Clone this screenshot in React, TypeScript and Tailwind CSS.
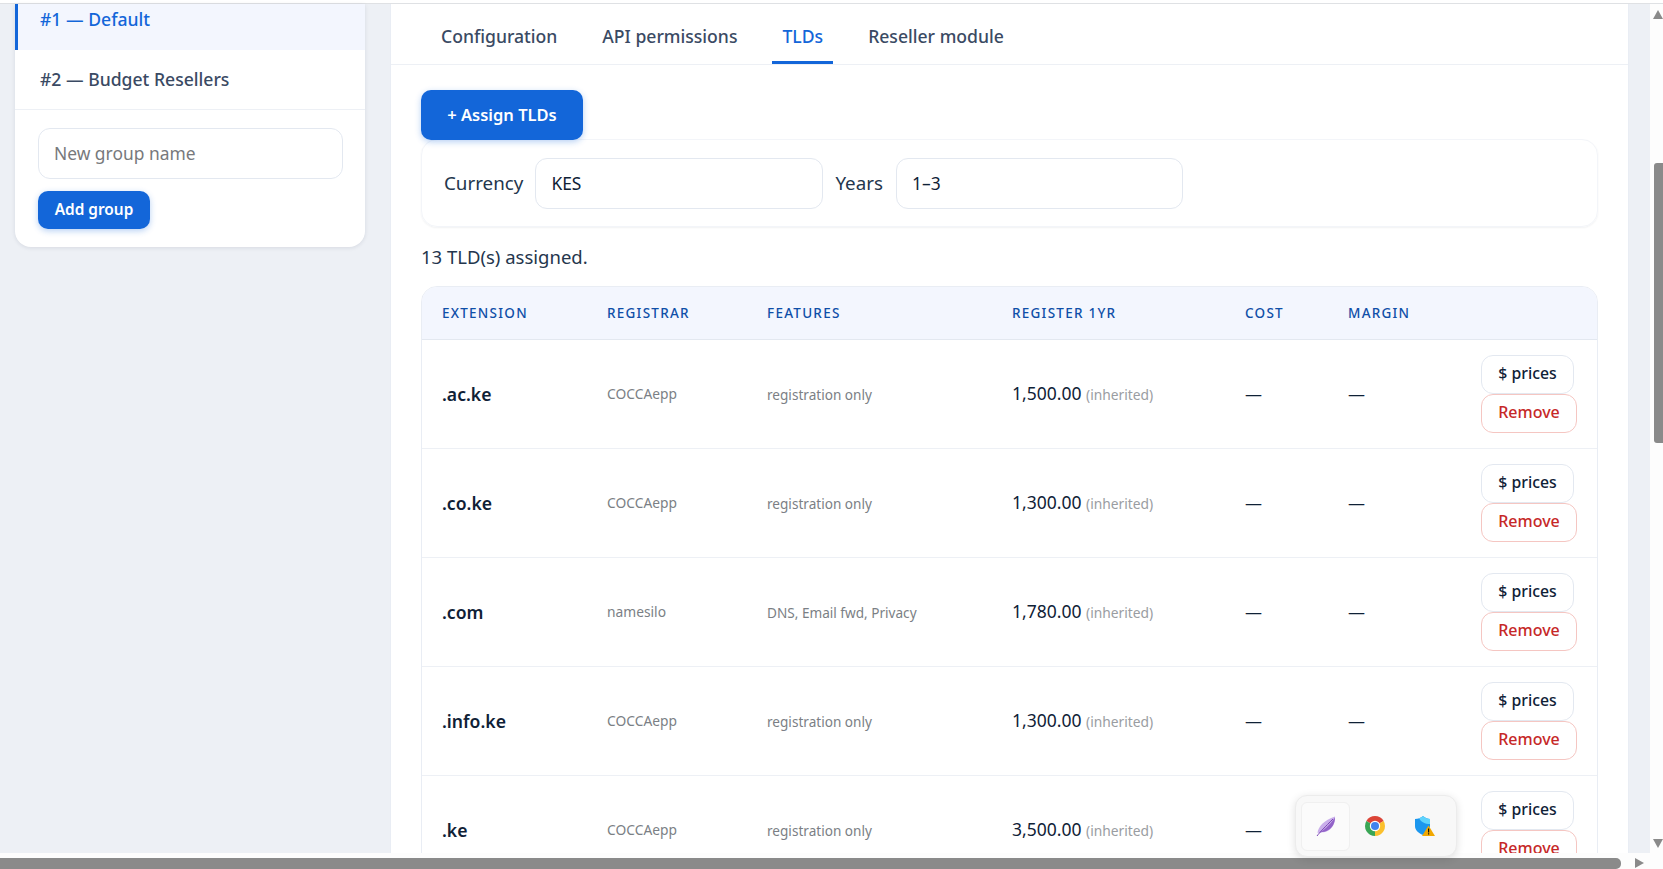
const rows = [
  { ext: ".ac.ke", registrar: "COCCAepp", features: "registration only", price: "1,500.00" },
  { ext: ".co.ke", registrar: "COCCAepp", features: "registration only", price: "1,300.00" },
  { ext: ".com", registrar: "namesilo", features: "DNS, Email fwd, Privacy", price: "1,780.00" },
  { ext: ".info.ke", registrar: "COCCAepp", features: "registration only", price: "1,300.00" },
  { ext: ".ke", registrar: "COCCAepp", features: "registration only", price: "3,500.00" },
];

const tabs = ["Configuration", "API permissions", "TLDs", "Reseller module"];

function Sidebar() {
  return (
    <aside className="w-[365px] shrink-0 pl-[15px]">
      <div className="overflow-hidden rounded-b-[16px] bg-white shadow-[0_1px_4px_rgba(15,33,54,0.1)]">
        <div className="flex h-[46px] items-start border-l-[3px] border-[#1366d9] bg-[#f3f6fe] pl-[22px] text-[17.6px] leading-[30px] font-medium text-[#1366d9]">
          #1 — Default
        </div>
        <div className="flex h-[60px] items-center border-b border-[#edf0f5] pl-[25px] text-[17.6px] font-medium text-[#3a4a63]">
          #2 — Budget Resellers
        </div>
        <div className="px-[23px] pt-[18px] pb-[18px]">
          <input
            placeholder="New group name"
            className="h-[51px] w-[305px] rounded-[12px] border border-[#e3e8f0] px-[15px] pb-[1px] text-[17.4px] outline-none placeholder:text-[#77797c]"
          />
          <button className="mt-[12px] block h-[38px] w-[112px] rounded-[10px] bg-[#1366d9] text-[15.4px] font-semibold text-white shadow-[0_2px_6px_rgba(19,102,217,0.3)]">
            Add group
          </button>
        </div>
      </div>
    </aside>
  );
}

function Tabs() {
  return (
    <div className="flex h-[61px] gap-[25px] border-b border-[#edf0f5] pl-[40px]">
      {tabs.map((tab) => (
        <div
          key={tab}
          className={
            tab === "TLDs"
              ? "flex items-center border-b-[3px] border-[#1366d9] px-[10px] pt-[7px] text-[17.6px] font-medium text-[#1366d9]"
              : "flex items-center px-[10px] pt-[4px] text-[17.6px] font-medium text-[#3a4a63]"
          }
        >
          {tab}
        </div>
      ))}
    </div>
  );
}

function Filters() {
  return (
    <div className="-mt-[1px] flex h-[88px] items-center gap-[12px] rounded-[16px] border border-[#f3f5f9] pl-[22px] shadow-[0_1px_2px_rgba(15,33,54,0.06)]">
      <span className="text-[18.8px] text-[#24364d]">Currency</span>
      <input
        defaultValue="KES"
        className="h-[51px] w-[288px] rounded-[12px] border border-[#e3e8f0] px-[15px] text-[17.4px] text-[#0f2136] outline-none"
      />
      <span className="mr-[1px] text-[18.8px] text-[#24364d]">Years</span>
      <input
        defaultValue="1–3"
        className="h-[51px] w-[287px] rounded-[12px] border border-[#e3e8f0] px-[15px] text-[17.4px] text-[#0f2136] outline-none"
      />
    </div>
  );
}

function TldTable() {
  const th = "h-[52px] px-[20px] text-left text-[13.5px] font-medium tracking-[1.25px] text-[#0f4fa8] uppercase";
  return (
    <div className="overflow-hidden rounded-t-[16px] border border-[#e9edf4]">
      <table className="w-full table-fixed border-collapse">
        <colgroup>
          <col className="w-[165px]" />
          <col className="w-[160px]" />
          <col className="w-[245px]" />
          <col className="w-[233px]" />
          <col className="w-[103px]" />
          <col className="w-[133px]" />
          <col />
        </colgroup>
        <thead>
          <tr className="border-b border-[#e3e8f0] bg-[#f3f6fe]">
            <th className={th}>Extension</th>
            <th className={th}>Registrar</th>
            <th className={th}>Features</th>
            <th className={th}>Register 1yr</th>
            <th className={th}>Cost</th>
            <th className={th}>Margin</th>
            <th className={th}></th>
          </tr>
        </thead>
        <tbody>
          {rows.map((row) => (
            <tr key={row.ext} className="border-b border-[#edf0f5]">
              <td className="px-[20px] pt-[1px] text-[17.6px] font-semibold text-[#0f2136]">{row.ext}</td>
              <td className="px-[20px] pt-[2px] text-[13.8px] text-[#7b7f85]">{row.registrar}</td>
              <td className="px-[20px] pt-[3px] text-[13.6px] text-[#7b7f85]">{row.features}</td>
              <td className="px-[20px] text-[17.5px] text-[#0f2136]">
                {row.price} <span className="text-[13.8px] text-[#9a9da2]">(inherited)</span>
              </td>
              <td className="px-[20px] text-[17px] text-[#0f2136]">—</td>
              <td className="px-[20px] text-[17px] text-[#0f2136]">—</td>
              <td className="py-[15px] pl-[20px]">
                <button className="block h-[39px] w-[93px] rounded-[12px] border border-[#e3e8f0] bg-white text-[15.8px] font-medium text-[#0f2136]">
                  $ prices
                </button>
                <button className="block h-[39px] w-[96px] rounded-[12px] border border-[#f5c6c2] bg-white pb-[2px] text-[16px] font-medium text-[#c62828]">
                  Remove
                </button>
              </td>
            </tr>
          ))}
        </tbody>
      </table>
    </div>
  );
}

function Tray() {
  return (
    <div className="absolute top-[795px] left-[1295px] flex h-[62px] w-[162px] items-center rounded-[12px] border border-[#ececec] bg-[#f8f8f8] pl-[5px] shadow-[0_2px_8px_rgba(0,0,0,0.12)]">
      <div className="flex h-[49px] w-[49px] items-center justify-center rounded-[6px] border border-[#f0f0f0] bg-[#fbfbfb]">
        <svg width="20" height="20" viewBox="0 0 20 20">
          <path d="M1.5 17C2 11 8 4 19 0.5C19.5 7 16.5 13 10.5 15.5C7 16.8 4 16 1.5 17Z" fill="#c9aeea" />
          <path d="M2.5 17C7 15 13 10 19 1.5C19 8 15.5 13 10.5 15C7.5 16.2 5 16 2.5 17Z" fill="#9263c8" />
          <path d="M1 20C4 16 9 11 17 3" stroke="#7b46b5" strokeWidth="1" fill="none" />
        </svg>
      </div>
      <div className="flex w-[50px] justify-center">
        <svg width="20" height="20" viewBox="0 0 20 20">
          <path d="M10 10 1.34 5A10 10 0 0 1 18.66 5Z" fill="#db4437" />
          <path d="M10 10 18.66 5A10 10 0 0 1 10 20Z" fill="#fbc02d" />
          <path d="M10 10 10 20A10 10 0 0 1 1.34 5Z" fill="#3aa655" />
          <circle cx="10" cy="10" r="5.2" fill="#fff" />
          <circle cx="10" cy="10" r="4" fill="#3f83ee" />
        </svg>
      </div>
      <div className="flex w-[50px] justify-center">
        <svg width="20" height="20" viewBox="0 0 20 20">
          <path d="M0 3C3 3 6 2 8 0C10 2 13 3 15 3V10C15 14 12 17 8 19C3 17 0 14 0 10Z" fill="#1c97ee" />
          <path d="M4 2.2C5.6 1.8 7 1 8 0C10 2 13 3 15 3V8C10 8 6 6 4 2.2Z" fill="#5fd3fc" />
          <path d="M13.5 9.5 20 20H7Z" fill="#f2a800" />
          <path d="M13 12.5h1.2v4H13ZM13 17.3h1.2v1.3H13Z" fill="#111" />
        </svg>
      </div>
    </div>
  );
}

export default function App() {
  return (
    <div
      className="relative flex h-[869px] flex-col overflow-hidden bg-[#edf0f5]"
      style={{ fontFamily: '"Noto Sans", "Open Sans", sans-serif' }}
    >
      <div className="h-[4px] shrink-0 border-b border-[#dfe1e4] bg-white" />
      <div className="flex min-h-0 flex-1">
        <Sidebar />
        <div className="w-[25px] shrink-0" />
        <main className="w-[1239px] shrink-0 overflow-hidden border-x border-[#e9edf4] bg-white">
          <Tabs />
          <div className="pr-[30px] pl-[30px]">
            <button className="relative z-10 mt-[25px] block h-[50px] w-[162px] rounded-[10px] bg-[#1366d9] text-[16.5px] font-semibold text-white shadow-[0_2px_6px_rgba(19,102,217,0.3)]">
              + Assign TLDs
            </button>
            <Filters />
            <p className="mt-[16px] mb-[15px] text-[18.5px] leading-[28px] text-[#24364d]">13 TLD(s) assigned.</p>
            <TldTable />
          </div>
        </main>
        <div className="flex-1" />
        <div className="relative flex w-[13px] shrink-0 flex-col items-end bg-[#fdfdfd] pr-0">
          <svg width="10" height="9" viewBox="0 0 10 9" className="mt-[6px]">
            <path d="M5 0 10 9H0Z" fill="#8a8a8a" />
          </svg>
          <div className="mt-[144px] h-[280px] w-[9px] rounded-l-[3px] bg-[#8a8a8a]" />
          <div className="flex-1" />
          <svg width="10" height="9" viewBox="0 0 10 9" className="mb-[5px]">
            <path d="M5 9 10 0H0Z" fill="#8a8a8a" />
          </svg>
        </div>
      </div>
      <div className="flex h-[16px] shrink-0 items-end bg-[#fdfdfd]">
        <div className="h-[11px] w-[1621px] rounded-r-[5px] bg-[#8a8a8a]" />
        <svg width="9" height="10" viewBox="0 0 9 10" className="mb-[1px] ml-[14px]">
          <path d="M9 5 0 10V0Z" fill="#8a8a8a" />
        </svg>
      </div>
      <Tray />
    </div>
  );
}
